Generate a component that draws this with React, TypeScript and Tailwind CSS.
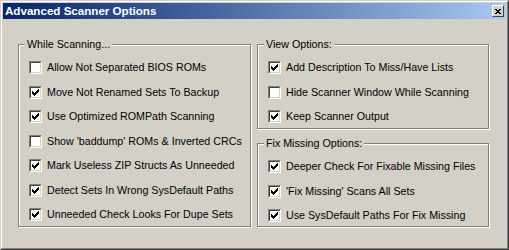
const leftOptions: [string, boolean][] = [
  ["Allow Not Separated BIOS ROMs", false],
  ["Move Not Renamed Sets To Backup", true],
  ["Use Optimized ROMPath Scanning", true],
  ["Show 'baddump' ROMs & Inverted CRCs", false],
  ["Mark Useless ZIP Structs As Unneeded", true],
  ["Detect Sets In Wrong SysDefault Paths", true],
  ["Unneeded Check Looks For Dupe Sets", true],
];

const viewOptions: [string, boolean][] = [
  ["Add Description To Miss/Have Lists", true],
  ["Hide Scanner Window While Scanning", false],
  ["Keep Scanner Output", true],
];

const fixOptions: [string, boolean][] = [
  ["Deeper Check For Fixable Missing Files", true],
  ["'Fix Missing' Scans All Sets", true],
  ["Use SysDefault Paths For Fix Missing", true],
];

// classic 7x7 check glyph, one 1x3 column per x
const checkCols = [2, 3, 4, 3, 2, 1, 0];

function CheckBox({ checked }: { checked: boolean }) {
  return (
    <div className="w-[13px] h-[13px] shrink-0 border border-t-[#808080] border-l-[#808080] border-r-white border-b-white">
      <div className="w-full h-full bg-white border border-t-[#404040] border-l-[#404040] border-r-[#d4d0c8] border-b-[#d4d0c8] flex items-center justify-center">
        {checked && (
          <svg width="7" height="7" viewBox="0 0 7 7" shapeRendering="crispEdges">
            {checkCols.map((y, x) => (
              <rect key={x} x={x} y={y} width="1" height="3" fill="#000" />
            ))}
          </svg>
        )}
      </div>
    </div>
  );
}

function Option({ label, checked }: { label: string; checked: boolean }) {
  return (
    <div className="flex items-center gap-[5px] h-[13px]">
      <CheckBox checked={checked} />
      <span className="leading-[13px] whitespace-nowrap">{label}</span>
    </div>
  );
}

function Group({
  title,
  items,
  className,
}: {
  title: string;
  items: [string, boolean][];
  className: string;
}) {
  return (
    <div
      className={`relative border border-[#808080] shadow-[inset_1px_1px_0_#fff,1px_1px_0_#fff] ${className}`}
    >
      <span className="absolute -top-[8px] left-[6px] bg-[#d4d0c8] px-[2px] leading-[14px] whitespace-nowrap">
        {title}
      </span>
      <div className="flex flex-col gap-[11.5px] pt-[16px] pl-[10px]">
        {items.map(([label, checked]) => (
          <Option key={label} label={label} checked={checked} />
        ))}
      </div>
    </div>
  );
}

export default function App() {
  return (
    <div
      className="w-[509px] h-[250px] bg-[#d4d0c8] text-black text-[10.7px] border border-t-[#d4d0c8] border-l-[#d4d0c8] border-r-[#404040] border-b-[#404040]"
      style={{ fontFamily: '"Liberation Sans", Arial, sans-serif' }}
    >
      <div className="w-full h-full border border-t-white border-l-white border-r-[#808080] border-b-[#808080] p-px flex flex-col">
        {/* title bar */}
        <div className="h-[16px] flex items-center justify-between pl-[2px] pr-[2px] bg-gradient-to-r from-[#0a246a] to-[#a6caf0]">
          <span className="text-white font-bold text-[11.6px] leading-[16px]">
            Advanced Scanner Options
          </span>
          <div className="w-[12px] h-[12px] bg-[#d4d0c8] border border-t-white border-l-white border-r-[#404040] border-b-[#404040] flex items-center justify-center">
            <svg width="6" height="5" viewBox="0 0 6 5" shapeRendering="crispEdges">
              <path d="M0 0h2v1h-2zM4 0h2v1h-2zM1 1h4v1h-4zM2 2h2v1h-2zM1 3h4v1h-4zM0 4h2v1h-2zM4 4h2v1h-2z" fill="#000" />
            </svg>
          </div>
        </div>

        {/* body */}
        <div className="flex gap-[6px] pt-[25px] pl-[15px]">
          <Group title="While Scanning..." items={leftOptions} className="w-[233px] h-[183px]" />
          <div className="flex flex-col gap-[14px]">
            <Group title="View Options:" items={viewOptions} className="w-[232px] h-[85px]" />
            <Group title="Fix Missing Options:" items={fixOptions} className="w-[232px] h-[84px]" />
          </div>
        </div>
      </div>
    </div>
  );
}
